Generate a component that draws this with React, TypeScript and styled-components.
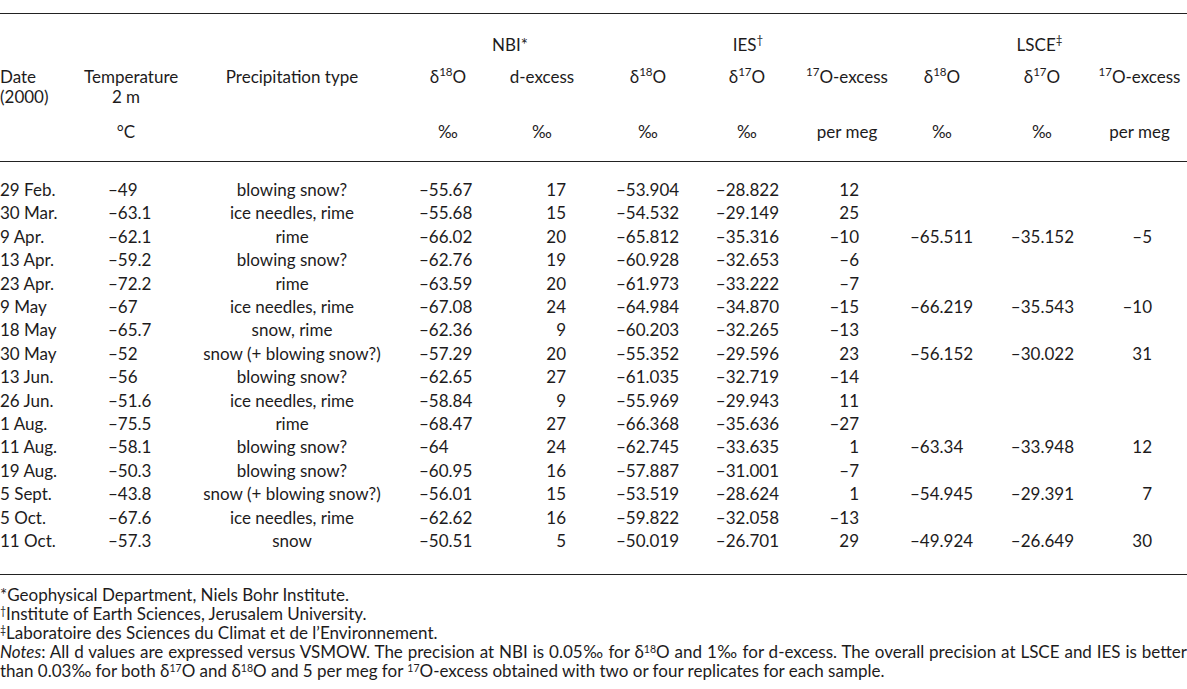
import React from 'react';
import styled, { createGlobalStyle } from 'styled-components';

const GlobalStyle = createGlobalStyle`
  html, body {
    margin: 0;
    padding: 0;
    background: #ffffff;
  }
  body {
    font-family: Lato, "Open Sans", sans-serif;
    color: #1d1b1c;
    font-size: 17px;
  }
`;

const Page = styled.div`
  width: 1187px;
  padding-top: 13px;
`;

const Table = styled.table`
  width: 1187px;
  border-collapse: collapse;
  table-layout: fixed;
  border-top: 1.5px solid #222;
  border-bottom: 1.5px solid #222;
`;

type Align = 'left' | 'center' | 'right';

const HeadCell = styled.th<{ $align?: Align; $pt?: number; $pb?: number; $lh?: number }>`
  font-weight: normal;
  padding: ${(p) => p.$pt ?? 0}px 0 ${(p) => p.$pb ?? 0}px 0;
  line-height: ${(p) => p.$lh ?? 20}px;
  text-align: ${(p) => p.$align ?? 'center'};
  white-space: nowrap;
  vertical-align: middle;
`;

const UnitRow = styled.tr`
  th {
    border-bottom: 1.5px solid #222;
  }
`;

const DataRow = styled.tr<{ $first?: boolean; $last?: boolean }>`
  td {
    padding-top: ${(p) => (p.$first ? 16 : 0)}px;
    padding-bottom: ${(p) => (p.$last ? 21 : 0)}px;
  }
`;

const DataCell = styled.td<{ $align: Align; $pl?: number; $pr?: number }>`
  line-height: 23.4px;
  text-align: ${(p) => p.$align};
  padding-left: ${(p) => p.$pl ?? 0}px !important;
  padding-right: ${(p) => p.$pr ?? 0}px !important;
  white-space: nowrap;
`;

const Sup = styled.sup<{ $small?: boolean }>`
  font-size: ${(p) => (p.$small ? 0.62 : 0.68)}em;
  line-height: 0;
  vertical-align: ${(p) => (p.$small ? 0.5 : 0.6)}em;
`;

const Notes = styled.div`
  padding-top: 10px;
  line-height: 19.2px;
`;

const NoteLine = styled.div`
  white-space: nowrap;
`;

const JustifiedLine = styled.div`
  text-align: justify;
  text-align-last: justify;
`;

type Col = { w: number; align: Align; pl?: number; pr?: number };

const cols: Col[] = [
  { w: 84, align: 'left' },
  { w: 84, align: 'left', pl: 24 },
  { w: 248, align: 'center' },
  { w: 64, align: 'left', pl: 3 },
  { w: 124, align: 'right', pr: 38 },
  { w: 88, align: 'left', pl: 12 },
  { w: 110, align: 'right', pr: 23 },
  { w: 90, align: 'right', pr: 33 },
  { w: 100, align: 'left', pl: 18 },
  { w: 100, align: 'right', pr: 18 },
  { w: 95, align: 'right', pr: 35 },
];

const rows: string[][] = [
  ['29 Feb.', '–49', 'blowing snow?', '–55.67', '17', '–53.904', '–28.822', '12'],
  ['30 Mar.', '–63.1', 'ice needles, rime', '–55.68', '15', '–54.532', '–29.149', '25'],
  ['9 Apr.', '–62.1', 'rime', '–66.02', '20', '–65.812', '–35.316', '–10', '–65.511', '–35.152', '–5'],
  ['13 Apr.', '–59.2', 'blowing snow?', '–62.76', '19', '–60.928', '–32.653', '–6'],
  ['23 Apr.', '–72.2', 'rime', '–63.59', '20', '–61.973', '–33.222', '–7'],
  ['9 May', '–67', 'ice needles, rime', '–67.08', '24', '–64.984', '–34.870', '–15', '–66.219', '–35.543', '–10'],
  ['18 May', '–65.7', 'snow, rime', '–62.36', '9', '–60.203', '–32.265', '–13'],
  ['30 May', '–52', 'snow (+ blowing snow?)', '–57.29', '20', '–55.352', '–29.596', '23', '–56.152', '–30.022', '31'],
  ['13 Jun.', '–56', 'blowing snow?', '–62.65', '27', '–61.035', '–32.719', '–14'],
  ['26 Jun.', '–51.6', 'ice needles, rime', '–58.84', '9', '–55.969', '–29.943', '11'],
  ['1 Aug.', '–75.5', 'rime', '–68.47', '27', '–66.368', '–35.636', '–27'],
  ['11 Aug.', '–58.1', 'blowing snow?', '–64', '24', '–62.745', '–33.635', '1', '–63.34', '–33.948', '12'],
  ['19 Aug.', '–50.3', 'blowing snow?', '–60.95', '16', '–57.887', '–31.001', '–7'],
  ['5 Sept.', '–43.8', 'snow (+ blowing snow?)', '–56.01', '15', '–53.519', '–28.624', '1', '–54.945', '–29.391', '7'],
  ['5 Oct.', '–67.6', 'ice needles, rime', '–62.62', '16', '–59.822', '–32.058', '–13'],
  ['11 Oct.', '–57.3', 'snow', '–50.51', '5', '–50.019', '–26.701', '29', '–49.924', '–26.649', '30'],
];

const Delta = ({ iso, small }: { iso: string; small?: boolean }) => (
  <>
    δ<Sup $small={small}>{iso}</Sup>O
  </>
);
const Ex17 = () => (
  <>
    <Sup>17</Sup>O-excess
  </>
);

const units = ['', '°C', '', '‰', '‰', '‰', '‰', 'per meg', '‰', '‰', 'per meg'];

export default function App() {
  return (
    <Page>
      <GlobalStyle />
      <Table>
        <colgroup>
          {cols.map((c, i) => (
            <col key={i} style={{ width: c.w }} />
          ))}
        </colgroup>
        <thead>
          <tr>
            <HeadCell colSpan={3} $pt={21} />
            <HeadCell colSpan={2} $pt={21}>
              NBI*
            </HeadCell>
            <HeadCell colSpan={3} $pt={21}>
              IES<Sup>†</Sup>
            </HeadCell>
            <HeadCell colSpan={3} $pt={21}>
              LSCE<Sup>‡</Sup>
            </HeadCell>
          </tr>
          <tr>
            <HeadCell $align="left" $pt={12}>Date</HeadCell>
            <HeadCell $pt={12}>Temperature</HeadCell>
            <HeadCell $pt={12}>Precipitation type</HeadCell>
            <HeadCell $pt={12}><Delta iso="18" /></HeadCell>
            <HeadCell $pt={12}>d-excess</HeadCell>
            <HeadCell $pt={12}><Delta iso="18" /></HeadCell>
            <HeadCell $pt={12}><Delta iso="17" /></HeadCell>
            <HeadCell $pt={12}><Ex17 /></HeadCell>
            <HeadCell $pt={12}><Delta iso="18" /></HeadCell>
            <HeadCell $pt={12}><Delta iso="17" /></HeadCell>
            <HeadCell $pt={12}><Ex17 /></HeadCell>
          </tr>
          <tr>
            <HeadCell $align="left" $lh={19}>(2000)</HeadCell>
            <HeadCell $lh={19}>2 m</HeadCell>
            <HeadCell colSpan={9} $lh={19} />
          </tr>
          <UnitRow>
            {units.map((u, i) => (
              <HeadCell key={i} $pt={16} $pb={19}>
                {u}
              </HeadCell>
            ))}
          </UnitRow>
        </thead>
        <tbody>
          {rows.map((r, ri) => (
            <DataRow key={ri} $first={ri === 0} $last={ri === rows.length - 1}>
              {cols.map((c, ci) => (
                <DataCell key={ci} $align={c.align} $pl={c.pl} $pr={c.pr}>
                  {r[ci] ?? ''}
                </DataCell>
              ))}
            </DataRow>
          ))}
        </tbody>
      </Table>
      <Notes>
        <NoteLine>*Geophysical Department, Niels Bohr Institute.</NoteLine>
        <NoteLine>
          <Sup $small>†</Sup>Institute of Earth Sciences, Jerusalem University.
        </NoteLine>
        <NoteLine>
          <Sup $small>‡</Sup>Laboratoire des Sciences du Climat et de l’Environnement.
        </NoteLine>
        <JustifiedLine>
          <em>Notes</em>: All d values are expressed versus VSMOW. The precision at NBI is 0.05‰ for{' '}
          <Delta iso="18" small /> and 1‰ for d-excess. The overall precision at LSCE and IES is better
        </JustifiedLine>
        <NoteLine>
          than 0.03‰ for both <Delta iso="17" small /> and <Delta iso="18" small /> and 5 per meg for{' '}
          <Sup $small>17</Sup>O-excess obtained with two or four replicates for each sample.
        </NoteLine>
      </Notes>
    </Page>
  );
}
